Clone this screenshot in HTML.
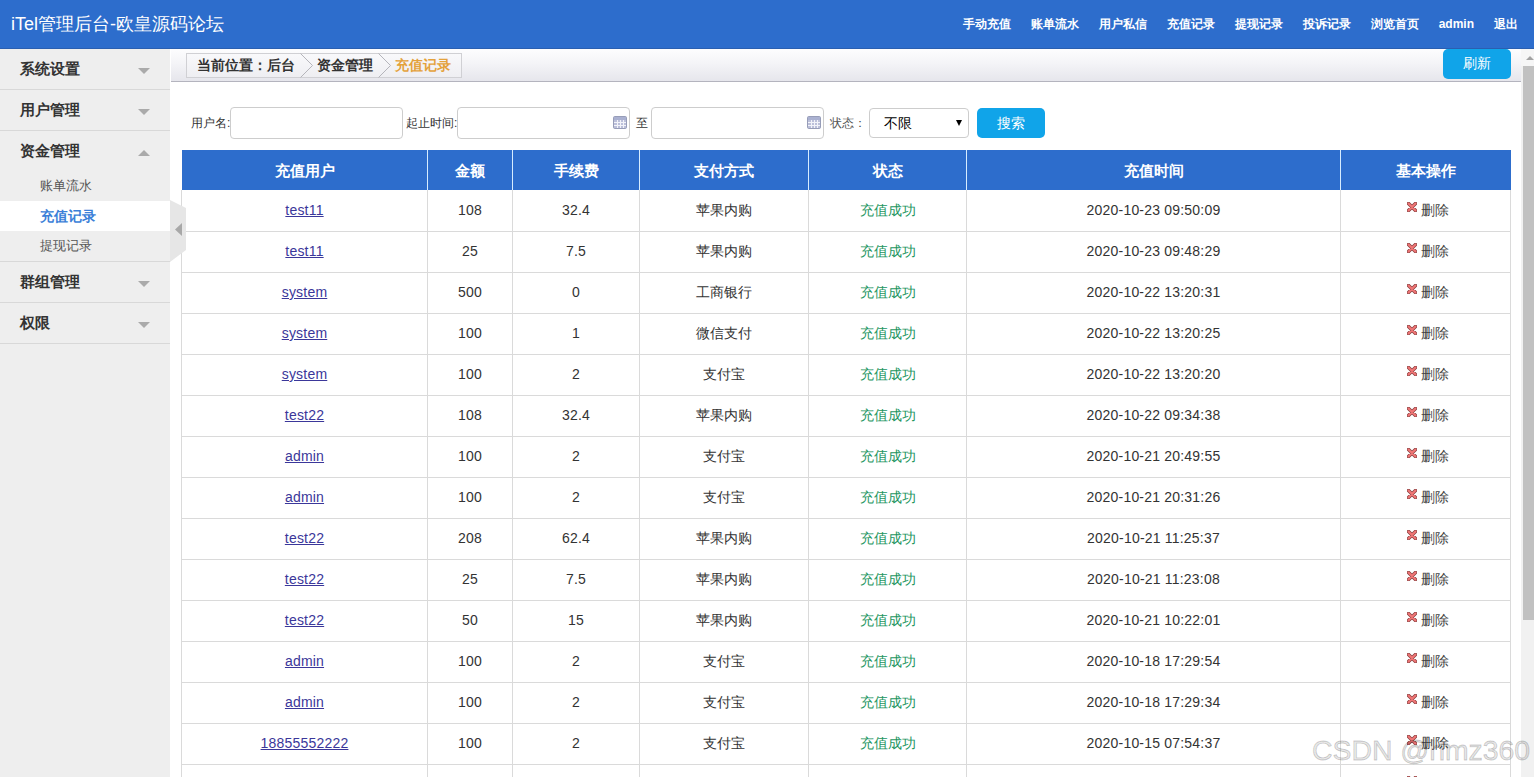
<!DOCTYPE html>
<html><head><meta charset="utf-8">
<style>
*{margin:0;padding:0;box-sizing:border-box}
html,body{width:1534px;height:777px;overflow:hidden;background:#fff;font-family:"Liberation Sans",sans-serif;color:#333}
#hd{position:absolute;left:0;top:0;width:1534px;height:49px;background:#2d6dcc;border-bottom:1px solid #2a5fb0}
#hd .title{position:absolute;left:11px;top:12px;font-size:18px;line-height:24px;color:#fff;white-space:nowrap}
#hd .nav{position:absolute;right:16px;top:16px;font-size:12px;line-height:16px;font-weight:bold;color:#fff;white-space:nowrap}
#hd .nav span{margin-left:20px}
#side{position:absolute;left:0;top:49px;width:170px;height:728px;background:#eee}
#side .it{position:relative;height:41px;border-bottom:1px solid #d8d8d8;font-size:15px;font-weight:bold;color:#333;line-height:40px;padding-left:20px}
#side .it .arr{position:absolute;left:138px;top:19px;width:0;height:0;border-left:6px solid transparent;border-right:6px solid transparent;border-top:6px solid #aaa}
#side .it .arr.up{border-top:0;border-bottom:6px solid #aaa}
#side .grp{border-bottom:1px solid #d8d8d8}
#side .grp .it{border-bottom:0;height:40px;line-height:40px}
#side .sub{height:30px;line-height:30px;font-size:13px;color:#555;padding-left:40px}
#side .sub.on{background:#fff;color:#3b7fd8;font-weight:bold;font-size:14px}
#tab{position:absolute;left:170px;top:200px;width:17px;height:62px;z-index:5}
#wm{position:absolute;left:1312px;top:733px;font-size:28.4px;line-height:34px;white-space:nowrap;color:rgba(0,0,0,0.1);-webkit-text-stroke:0.9px rgba(0,0,0,0.2);z-index:6}
#main{position:absolute;left:171px;top:49px;width:1350px;height:728px;background:#fff}
#bc{position:absolute;left:0;top:0;width:1350px;height:33px;background:linear-gradient(#fdfdfe,#f5f5f8 40%,#e6e6ec);border-bottom:1px solid #b4b4be}
#bcbox{position:absolute;left:15px;top:4px;width:276px;height:25px;border:1px solid #d0d0d4;background:linear-gradient(#f9f9fb,#eeeef2)}
#bcbox span{position:absolute;top:0;line-height:23px;font-size:14px;font-weight:bold;color:#333;white-space:nowrap}
#bcbox svg{position:absolute;top:-1px}
#refresh{position:absolute;left:1272px;top:0;width:68px;height:30px;background:#10a4e9;border-radius:5px;color:#fff;font-size:14px;line-height:29px;text-align:center}
#form{position:absolute;left:0;top:58px;width:1350px;height:31px;font-size:12px;color:#333}
#form .lb{position:absolute;top:1px;line-height:31px;white-space:nowrap}
#form .in{position:absolute;top:0;height:32px;border:1px solid #cdcdcd;border-radius:4px;background:#fff}
#form .cal{position:absolute;left:155px;top:8px}
#form .sel{position:absolute;left:698px;top:1px;width:100px;height:30px;border:1px solid #cdcdcd;border-radius:4px;background:#fff;font-size:14px;color:#000;line-height:28px;padding-left:14px}
#form .sel i{position:absolute;left:86px;top:11px;width:0;height:0;border-left:3px solid transparent;border-right:3px solid transparent;border-top:6px solid #000}
#form .btn{position:absolute;left:806px;top:1px;width:68px;height:30px;background:#10a4e9;border-radius:5px;color:#fff;font-size:14px;line-height:30px;text-align:center}
table{position:absolute;left:10px;top:101px;border-collapse:separate;border-spacing:0;table-layout:fixed;width:1330px}
th{background:#2d6dcc;color:#fff;font-size:15px;font-weight:bold;height:40px;border-right:1px solid #d6ecff;text-align:center;padding:2px 0 0 0}
th:first-child{border-left:1px solid #fff}
th:last-child{border-right:1px solid #2d6dcc}
td{height:41px;border-right:1px solid #dadada;border-bottom:1px solid #dadada;text-align:center;font-size:14px;color:#333;padding:0}
td:first-child{border-left:1px solid #dadada}
tbody tr:first-child td{height:42px}
td.n, td a{letter-spacing:0.2px}
td.n span, td a{position:relative;top:-1px}
td a{color:#3b379a;text-decoration:underline}
td.ok{color:#23965f}
td.op{color:#444;padding-left:5px}
td .x{vertical-align:top;margin-top:0;margin-right:3px;position:relative;left:-1px}
#sb{position:absolute;left:1521px;top:49px;width:13px;height:728px;background:#f1f1f1}
#sb:before{content:"";position:absolute;left:0;top:0;width:13px;height:17px;background:#f6f6f6}
#sb .th{position:absolute;left:2px;top:17px;width:11px;height:554px;background:#c1c1c1}
#sb .up{position:absolute;left:5px;top:7px;width:0;height:0;border-left:4px solid transparent;border-right:4px solid transparent;border-bottom:4px solid #a3a3a3}
</style></head><body>
<div id="hd">
  <div class="title">iTel管理后台-欧皇源码论坛</div>
  <div class="nav"><span>手动充值</span><span>账单流水</span><span>用户私信</span><span>充值记录</span><span>提现记录</span><span>投诉记录</span><span>浏览首页</span><span>admin</span><span>退出</span></div>
</div>
<div id="side">
  <div class="it">系统设置<i class="arr"></i></div>
  <div class="it">用户管理<i class="arr"></i></div>
  <div class="grp">
    <div class="it">资金管理<i class="arr up"></i></div>
    <div class="sub">账单流水</div>
    <div class="sub on">充值记录</div>
    <div class="sub">提现记录</div>
  </div>
  <div class="it">群组管理<i class="arr"></i></div>
  <div class="it">权限<i class="arr"></i></div>
</div>
<svg id="tab" viewBox="0 0 17 62"><path d="M0 0L16 8V50L0 62Z" fill="#e6e6e6"/><path d="M12 23L5 29.5L12 36Z" fill="#a8a8a8"/></svg>
<div id="main">
  <div id="bc">
    <div id="bcbox"><span style="left:10px">当前位置：后台</span><svg style="left:112px" width="16" height="25" viewBox="0 0 16 25"><path d="M1.5 0.5L13.5 12.5L1.5 24.5" fill="none" stroke="#b5b5bb" stroke-width="1"/></svg><span style="left:130px">资金管理</span><svg style="left:190px" width="16" height="25" viewBox="0 0 16 25"><path d="M1.5 0.5L13.5 12.5L1.5 24.5" fill="none" stroke="#b5b5bb" stroke-width="1"/></svg><span style="left:208px;color:#e4a23c">充值记录</span></div>
    <div id="refresh">刷新</div>
  </div>
  <div id="form">
    <span class="lb" style="left:20px">用户名:</span>
    <div class="in" style="left:59px;width:173px"></div>
    <span class="lb" style="left:235px">起止时间:</span>
    <div class="in" style="left:286px;width:173px"><svg class="cal" width="14" height="13" viewBox="0 0 14 13"><rect x="0.5" y="0.5" width="13" height="12" rx="1.2" fill="#bcc0da" stroke="#979db8"/><rect x="1" y="1" width="12" height="3" fill="#aab1d1"/><path d="M4.5 4V12M7.5 4V12M10.5 4V12M1 6.5H13M1 9.5H13" stroke="#f2f3f9" stroke-width="1"/></svg></div>
    <span class="lb" style="left:465px">至</span>
    <div class="in" style="left:480px;width:173px"><svg class="cal" width="14" height="13" viewBox="0 0 14 13"><rect x="0.5" y="0.5" width="13" height="12" rx="1.2" fill="#bcc0da" stroke="#979db8"/><rect x="1" y="1" width="12" height="3" fill="#aab1d1"/><path d="M4.5 4V12M7.5 4V12M10.5 4V12M1 6.5H13M1 9.5H13" stroke="#f2f3f9" stroke-width="1"/></svg></div>
    <span class="lb" style="left:659px;color:#555">状态：</span>
    <div class="sel">不限<i></i></div>
    <div class="btn">搜索</div>
  </div>
  <table>
    <colgroup><col style="width:247px"><col style="width:85px"><col style="width:127px"><col style="width:169px"><col style="width:158px"><col style="width:374px"><col style="width:170px"></colgroup>
    <thead><tr><th>充值用户</th><th>金额</th><th>手续费</th><th>支付方式</th><th>状态</th><th>充值时间</th><th>基本操作</th></tr></thead>
    <tbody>
<tr><td><a>test11</a></td><td class="n"><span>108</span></td><td class="n"><span>32.4</span></td><td>苹果内购</td><td class="ok">充值成功</td><td class="n"><span>2020-10-23 09:50:09</span></td><td class="op"><svg class="x" width="10" height="10" viewBox="0 0 10 10"><path d="M1.5 1.5L8.5 8.5M8.5 1.5L1.5 8.5" stroke="#8e4444" stroke-width="3.6" stroke-linecap="round"/><path d="M1.5 1.5L8.5 8.5M8.5 1.5L1.5 8.5" stroke="#f07676" stroke-width="2" stroke-linecap="round"/></svg>删除</td></tr>
<tr><td><a>test11</a></td><td class="n"><span>25</span></td><td class="n"><span>7.5</span></td><td>苹果内购</td><td class="ok">充值成功</td><td class="n"><span>2020-10-23 09:48:29</span></td><td class="op"><svg class="x" width="10" height="10" viewBox="0 0 10 10"><path d="M1.5 1.5L8.5 8.5M8.5 1.5L1.5 8.5" stroke="#8e4444" stroke-width="3.6" stroke-linecap="round"/><path d="M1.5 1.5L8.5 8.5M8.5 1.5L1.5 8.5" stroke="#f07676" stroke-width="2" stroke-linecap="round"/></svg>删除</td></tr>
<tr><td><a>system</a></td><td class="n"><span>500</span></td><td class="n"><span>0</span></td><td>工商银行</td><td class="ok">充值成功</td><td class="n"><span>2020-10-22 13:20:31</span></td><td class="op"><svg class="x" width="10" height="10" viewBox="0 0 10 10"><path d="M1.5 1.5L8.5 8.5M8.5 1.5L1.5 8.5" stroke="#8e4444" stroke-width="3.6" stroke-linecap="round"/><path d="M1.5 1.5L8.5 8.5M8.5 1.5L1.5 8.5" stroke="#f07676" stroke-width="2" stroke-linecap="round"/></svg>删除</td></tr>
<tr><td><a>system</a></td><td class="n"><span>100</span></td><td class="n"><span>1</span></td><td>微信支付</td><td class="ok">充值成功</td><td class="n"><span>2020-10-22 13:20:25</span></td><td class="op"><svg class="x" width="10" height="10" viewBox="0 0 10 10"><path d="M1.5 1.5L8.5 8.5M8.5 1.5L1.5 8.5" stroke="#8e4444" stroke-width="3.6" stroke-linecap="round"/><path d="M1.5 1.5L8.5 8.5M8.5 1.5L1.5 8.5" stroke="#f07676" stroke-width="2" stroke-linecap="round"/></svg>删除</td></tr>
<tr><td><a>system</a></td><td class="n"><span>100</span></td><td class="n"><span>2</span></td><td>支付宝</td><td class="ok">充值成功</td><td class="n"><span>2020-10-22 13:20:20</span></td><td class="op"><svg class="x" width="10" height="10" viewBox="0 0 10 10"><path d="M1.5 1.5L8.5 8.5M8.5 1.5L1.5 8.5" stroke="#8e4444" stroke-width="3.6" stroke-linecap="round"/><path d="M1.5 1.5L8.5 8.5M8.5 1.5L1.5 8.5" stroke="#f07676" stroke-width="2" stroke-linecap="round"/></svg>删除</td></tr>
<tr><td><a>test22</a></td><td class="n"><span>108</span></td><td class="n"><span>32.4</span></td><td>苹果内购</td><td class="ok">充值成功</td><td class="n"><span>2020-10-22 09:34:38</span></td><td class="op"><svg class="x" width="10" height="10" viewBox="0 0 10 10"><path d="M1.5 1.5L8.5 8.5M8.5 1.5L1.5 8.5" stroke="#8e4444" stroke-width="3.6" stroke-linecap="round"/><path d="M1.5 1.5L8.5 8.5M8.5 1.5L1.5 8.5" stroke="#f07676" stroke-width="2" stroke-linecap="round"/></svg>删除</td></tr>
<tr><td><a>admin</a></td><td class="n"><span>100</span></td><td class="n"><span>2</span></td><td>支付宝</td><td class="ok">充值成功</td><td class="n"><span>2020-10-21 20:49:55</span></td><td class="op"><svg class="x" width="10" height="10" viewBox="0 0 10 10"><path d="M1.5 1.5L8.5 8.5M8.5 1.5L1.5 8.5" stroke="#8e4444" stroke-width="3.6" stroke-linecap="round"/><path d="M1.5 1.5L8.5 8.5M8.5 1.5L1.5 8.5" stroke="#f07676" stroke-width="2" stroke-linecap="round"/></svg>删除</td></tr>
<tr><td><a>admin</a></td><td class="n"><span>100</span></td><td class="n"><span>2</span></td><td>支付宝</td><td class="ok">充值成功</td><td class="n"><span>2020-10-21 20:31:26</span></td><td class="op"><svg class="x" width="10" height="10" viewBox="0 0 10 10"><path d="M1.5 1.5L8.5 8.5M8.5 1.5L1.5 8.5" stroke="#8e4444" stroke-width="3.6" stroke-linecap="round"/><path d="M1.5 1.5L8.5 8.5M8.5 1.5L1.5 8.5" stroke="#f07676" stroke-width="2" stroke-linecap="round"/></svg>删除</td></tr>
<tr><td><a>test22</a></td><td class="n"><span>208</span></td><td class="n"><span>62.4</span></td><td>苹果内购</td><td class="ok">充值成功</td><td class="n"><span>2020-10-21 11:25:37</span></td><td class="op"><svg class="x" width="10" height="10" viewBox="0 0 10 10"><path d="M1.5 1.5L8.5 8.5M8.5 1.5L1.5 8.5" stroke="#8e4444" stroke-width="3.6" stroke-linecap="round"/><path d="M1.5 1.5L8.5 8.5M8.5 1.5L1.5 8.5" stroke="#f07676" stroke-width="2" stroke-linecap="round"/></svg>删除</td></tr>
<tr><td><a>test22</a></td><td class="n"><span>25</span></td><td class="n"><span>7.5</span></td><td>苹果内购</td><td class="ok">充值成功</td><td class="n"><span>2020-10-21 11:23:08</span></td><td class="op"><svg class="x" width="10" height="10" viewBox="0 0 10 10"><path d="M1.5 1.5L8.5 8.5M8.5 1.5L1.5 8.5" stroke="#8e4444" stroke-width="3.6" stroke-linecap="round"/><path d="M1.5 1.5L8.5 8.5M8.5 1.5L1.5 8.5" stroke="#f07676" stroke-width="2" stroke-linecap="round"/></svg>删除</td></tr>
<tr><td><a>test22</a></td><td class="n"><span>50</span></td><td class="n"><span>15</span></td><td>苹果内购</td><td class="ok">充值成功</td><td class="n"><span>2020-10-21 10:22:01</span></td><td class="op"><svg class="x" width="10" height="10" viewBox="0 0 10 10"><path d="M1.5 1.5L8.5 8.5M8.5 1.5L1.5 8.5" stroke="#8e4444" stroke-width="3.6" stroke-linecap="round"/><path d="M1.5 1.5L8.5 8.5M8.5 1.5L1.5 8.5" stroke="#f07676" stroke-width="2" stroke-linecap="round"/></svg>删除</td></tr>
<tr><td><a>admin</a></td><td class="n"><span>100</span></td><td class="n"><span>2</span></td><td>支付宝</td><td class="ok">充值成功</td><td class="n"><span>2020-10-18 17:29:54</span></td><td class="op"><svg class="x" width="10" height="10" viewBox="0 0 10 10"><path d="M1.5 1.5L8.5 8.5M8.5 1.5L1.5 8.5" stroke="#8e4444" stroke-width="3.6" stroke-linecap="round"/><path d="M1.5 1.5L8.5 8.5M8.5 1.5L1.5 8.5" stroke="#f07676" stroke-width="2" stroke-linecap="round"/></svg>删除</td></tr>
<tr><td><a>admin</a></td><td class="n"><span>100</span></td><td class="n"><span>2</span></td><td>支付宝</td><td class="ok">充值成功</td><td class="n"><span>2020-10-18 17:29:34</span></td><td class="op"><svg class="x" width="10" height="10" viewBox="0 0 10 10"><path d="M1.5 1.5L8.5 8.5M8.5 1.5L1.5 8.5" stroke="#8e4444" stroke-width="3.6" stroke-linecap="round"/><path d="M1.5 1.5L8.5 8.5M8.5 1.5L1.5 8.5" stroke="#f07676" stroke-width="2" stroke-linecap="round"/></svg>删除</td></tr>
<tr><td><a>18855552222</a></td><td class="n"><span>100</span></td><td class="n"><span>2</span></td><td>支付宝</td><td class="ok">充值成功</td><td class="n"><span>2020-10-15 07:54:37</span></td><td class="op"><svg class="x" width="10" height="10" viewBox="0 0 10 10"><path d="M1.5 1.5L8.5 8.5M8.5 1.5L1.5 8.5" stroke="#8e4444" stroke-width="3.6" stroke-linecap="round"/><path d="M1.5 1.5L8.5 8.5M8.5 1.5L1.5 8.5" stroke="#f07676" stroke-width="2" stroke-linecap="round"/></svg>删除</td></tr>
<tr><td><a>admin</a></td><td class="n"><span>100</span></td><td class="n"><span>2</span></td><td>支付宝</td><td class="ok">充值成功</td><td class="n"><span>2020-10-15 07:50:00</span></td><td class="op"><svg class="x" width="10" height="10" viewBox="0 0 10 10"><path d="M1.5 1.5L8.5 8.5M8.5 1.5L1.5 8.5" stroke="#8e4444" stroke-width="3.6" stroke-linecap="round"/><path d="M1.5 1.5L8.5 8.5M8.5 1.5L1.5 8.5" stroke="#f07676" stroke-width="2" stroke-linecap="round"/></svg>删除</td></tr>
</tbody>
  </table>
</div>
<div id="wm">CSDN @hmz360</div>
<div id="sb"><i class="up"></i><div class="th"></div></div>
</body></html>
